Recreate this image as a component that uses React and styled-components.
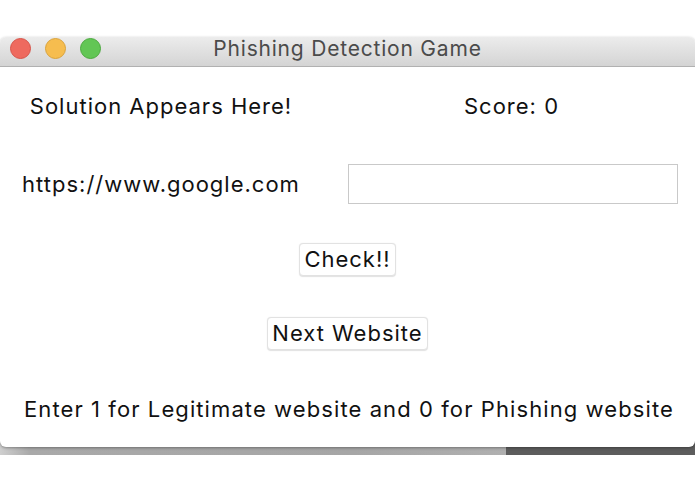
import React from 'react';
import styled, { createGlobalStyle } from 'styled-components';

const GlobalStyle = createGlobalStyle`
  html, body {
    margin: 0;
    padding: 0;
    background: #ffffff;
  }
  body {
    font-family: "Inter", "Liberation Sans", sans-serif;
    -webkit-font-smoothing: antialiased;
  }
`;

const Page = styled.div`
  width: 695px;
  height: 494px;
  padding-top: 37px;
  box-sizing: border-box;
  overflow: hidden;
`;

const Stage = styled.div`
  display: flex;
  flex-direction: column;
`;

const Window = styled.div`
  position: relative;
  z-index: 1;
  width: 100%;
  background: #ffffff;
  border-radius: 6px;
  box-shadow: 0 1px 3px rgba(0, 0, 0, 0.35);
  overflow: hidden;
`;

const TitleBar = styled.div`
  height: 30px;
  display: flex;
  align-items: flex-start;
  padding-top: 1px;
  box-sizing: border-box;
  position: relative;
  background: linear-gradient(#ececec, #d4d4d4);
  border-bottom: 1px solid #b1b1b1;
`;

const Lights = styled.div`
  display: flex;
  gap: 14px;
  padding-left: 10px;
`;

const Light = styled.span`
  width: 21px;
  height: 21px;
  border-radius: 50%;
  box-sizing: border-box;
  background: ${p => p.color};
  border: 1px solid ${p => p.edge};
`;

const Title = styled.div`
  position: absolute;
  top: 1px;
  left: 0;
  right: 0;
  line-height: 21px;
  text-align: center;
  font-size: 21px;
  letter-spacing: 0.8px;
  color: #4b4b4b;
`;

const Content = styled.div`
  display: grid;
  grid-template-columns: 322px 1fr;
  grid-template-rows: 78px 78px 72px 76px 76px;
  align-items: center;
  color: #111;
  font-size: 22px;
  letter-spacing: 1px;
`;

const Label = styled.div`
  justify-self: center;
  margin-left: ${p => p.$shift || 0}px;
`;

const UrlInput = styled.input`
  margin-left: 26px;
  width: 330px;
  height: 40px;
  box-sizing: border-box;
  border: 1px solid #c9c9c9;
  outline: none;
  font: inherit;
`;

const ButtonRow = styled.div`
  grid-column: 1 / 3;
  display: flex;
  justify-content: center;
`;

const Button = styled.button`
  font: inherit;
  letter-spacing: inherit;
  color: #111;
  background: #ffffff;
  border: 1px solid #e2e2e2;
  border-radius: 4px;
  padding: 0 4px;
  height: 33px;
  box-shadow: 0 0.5px 1px rgba(0, 0, 0, 0.12);
`;

const Hint = styled.div`
  grid-column: 1 / 3;
  padding-left: 24px;
  letter-spacing: 1.09px;
`;

const Strip = styled.div`
  display: flex;
  height: 14px;
  margin-top: -6px;
`;

const StripLight = styled.div`
  width: 506px;
  background: linear-gradient(90deg, #cfcfcf, #a9a9a9 6%, #a6a6a6 70%, #b0b0b0);
`;

const StripDark = styled.div`
  flex: 1;
  background: #5d5d5d;
`;

export default function App() {
  return (
    <>
      <GlobalStyle />
      <Page>
        <Stage>
          <Window>
            <TitleBar>
              <Lights>
                <Light color="#ee6a5f" edge="#d6544a" />
                <Light color="#f6bd4f" edge="#d9a23b" />
                <Light color="#62c655" edge="#4ca93f" />
              </Lights>
              <Title>Phishing Detection Game</Title>
            </TitleBar>
            <Content>
              <Label>Solution Appears Here!</Label>
              <Label $shift={6}>Score: 0</Label>
              <Label>https://www.google.com</Label>
              <UrlInput />
              <ButtonRow>
                <Button>Check!!</Button>
              </ButtonRow>
              <ButtonRow>
                <Button>Next Website</Button>
              </ButtonRow>
              <Hint>Enter 1 for Legitimate website and 0 for Phishing website</Hint>
            </Content>
          </Window>
          <Strip>
            <StripLight />
            <StripDark />
          </Strip>
        </Stage>
      </Page>
    </>
  );
}
